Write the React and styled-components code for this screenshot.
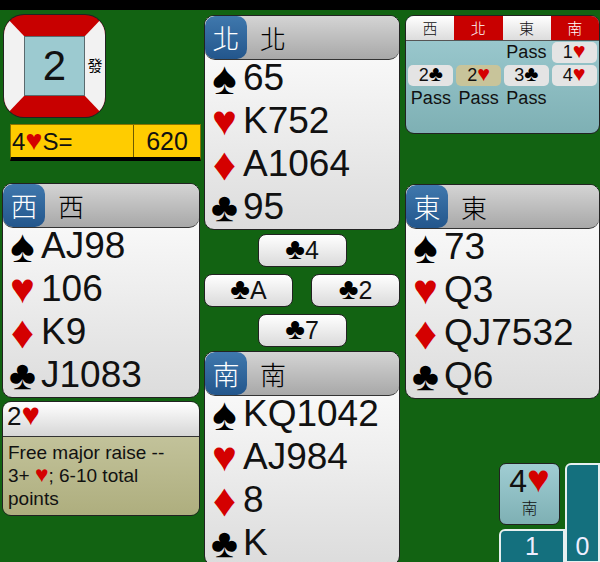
import styled, { createGlobalStyle } from 'styled-components';

const GlobalStyle = createGlobalStyle`
	html, body {
		margin: 0;
		padding: 0;
		height: 100%;
		overflow: hidden;
		background-color: #126312;
		font-family: 'Liberation Sans', 'Noto Sans CJK TC', sans-serif;
		color: #111;
	}
`;

const hands = {
	north: { seat: '北', cards: ['65', 'K752', 'A1064', '95'] },
	west: { seat: '西', cards: ['AJ98', '106', 'K9', 'J1083'] },
	east: { seat: '東', cards: ['73', 'Q3', 'QJ7532', 'Q6'] },
	south: { seat: '南', cards: ['KQ1042', 'AJ984', '8', 'K'] },
};

// glyphs differ in size, so each suit gets its own font size in the hand rows
const suits = [
	{ glyph: '♠', size: 46 },
	{ glyph: '♥', size: 42 },
	{ glyph: '♦', size: 46 },
	{ glyph: '♣', size: 41 },
];

function Hand({ seat, cards }) {
	return (
		<HandBox>
			<HandHeader>
				<SeatBadge>{seat}</SeatBadge>
				<SeatName>{seat}</SeatName>
			</HandHeader>
			{cards.map((c, i) => (
				<HandRow key={i}>
					<RowSuit $red={i === 1 || i === 2} $size={suits[i].size}>
						{suits[i].glyph}
					</RowSuit>
					{c}
				</HandRow>
			))}
		</HandBox>
	);
}

function Bid({ level, suit, $active }) {
	return (
		<BidChip $active={$active}>
			{level}
			<Suit $red={suit === '♥'}>{suit}</Suit>
		</BidChip>
	);
}

function App() {
	return (
		<>
			<GlobalStyle />
			<TopBar />
			<Table>
				<LeftColumn>
					<Board>
						<BoardNumber>2</BoardNumber>
						<Dealer>發</Dealer>
					</Board>
					<Score>
						<Contract>
							4<Suit $red>♥</Suit>S=
						</Contract>
						<Points>620</Points>
					</Score>
					<Hand {...hands.west} />
					<Explain>
						<ExplainHead>
							2<Suit $red>♥</Suit>
						</ExplainHead>
						<ExplainBody>
							Free major raise -- 3+ <Suit $red>♥</Suit>; 6-10 total points
						</ExplainBody>
					</Explain>
				</LeftColumn>

				<CenterColumn>
					<Hand {...hands.north} />
					<Trick>
						<TrickRow>
							<Played><Suit>♣</Suit>4</Played>
						</TrickRow>
						<TrickRow $split>
							<Played><Suit>♣</Suit>A</Played>
							<Played><Suit>♣</Suit>2</Played>
						</TrickRow>
						<TrickRow>
							<Played><Suit>♣</Suit>7</Played>
						</TrickRow>
					</Trick>
					<Hand {...hands.south} />
				</CenterColumn>

				<RightColumn>
					<Auction>
						<AuctionHead>
							<SeatTab>西</SeatTab>
							<SeatTab $vul>北</SeatTab>
							<SeatTab>東</SeatTab>
							<SeatTab $vul>南</SeatTab>
						</AuctionHead>
						<AuctionGrid>
							<span />
							<span />
							<Pass>Pass</Pass>
							<Bid level="1" suit="♥" />
							<Bid level="2" suit="♣" />
							<Bid level="2" suit="♥" $active />
							<Bid level="3" suit="♣" />
							<Bid level="4" suit="♥" />
							<Pass>Pass</Pass>
							<Pass>Pass</Pass>
							<Pass>Pass</Pass>
						</AuctionGrid>
					</Auction>
					<Hand {...hands.east} />
					<Status>
						<StatusLeft>
							<LastBid>
								<div>
									4<Suit $red>♥</Suit>
								</div>
								<LastSeat>南</LastSeat>
							</LastBid>
							<Tricks $wide>1</Tricks>
						</StatusLeft>
						<Tricks>0</Tricks>
					</Status>
				</RightColumn>
			</Table>
		</>
	);
}

export default App;

const TopBar = styled.div`
	height: 10px;
	background-color: #000;
`;

const Table = styled.div`
	display: grid;
	grid-template-columns: 198px 197px 195px;
	column-gap: 3px;
	padding: 5px 0 0 2px;
	height: 552px;
	box-sizing: border-box;
	overflow: hidden;
	align-items: start;
`;

const LeftColumn = styled.div`
	display: flex;
	flex-direction: column;
`;

const CenterColumn = styled.div`
	display: flex;
	flex-direction: column;
	margin-left: 1px;
`;

const RightColumn = styled.div`
	display: flex;
	flex-direction: column;
	margin-left: 2px;
	width: 195px;
`;

const Suit = styled.span`
	font-size: 1.2em;
	line-height: 0;
	color: ${(p) => (p.$red ? '#d40000' : '#000')};
`;

const Board = styled.div`
	position: relative;
	box-sizing: border-box;
	width: 101px;
	height: 102px;
	margin-left: 2px;
	display: flex;
	align-items: center;
	justify-content: center;
	background: #9ccad0;
	border-style: solid;
	border-width: 21px 20px;
	border-color: #c80000 #f2f2f2;
	border-radius: 20px;
	box-shadow: 0 0 0 1px #222, inset 0 0 0 1px #5a6a6e;
`;

const BoardNumber = styled.div`
	font-size: 42px;
	line-height: 1;
`;

const Dealer = styled.div`
	position: absolute;
	right: -20px;
	top: 18px;
	width: 20px;
	text-align: center;
	font-size: 15px;
	font-family: 'Noto Sans CJK TC', sans-serif;
	color: #000;
`;

const Score = styled.div`
	display: flex;
	margin: 7px 0 0 8px;
	width: 191px;
	height: 37px;
	background-color: #ffcc00;
	border: 1px solid #8a7300;
	border-bottom: 4px solid #000;
	box-sizing: border-box;
	font-size: 25px;
	line-height: 33px;
`;

const Contract = styled.div`
	flex: 1;
	padding-left: 1px;
	font-size: 24px;
	border-right: 1px solid #6b5a00;
`;

const Points = styled.div`
	width: 66px;
	text-align: center;
`;

const HandBox = styled.div`
	width: 100%;
	height: 215px;
	flex-shrink: 0;
	box-sizing: border-box;
	border: 1px solid #222;
	border-radius: 10px;
	background: linear-gradient(#ffffff, #dcdcdc);
	overflow: hidden;
	${LeftColumn} & {
		margin-top: 22px;
	}
	${RightColumn} & {
		margin-top: 50px;
	}
`;

const HandHeader = styled.div`
	display: flex;
	align-items: center;
	height: 43px;
	border-bottom: 1px solid #333;
	border-radius: 0 0 10px 10px;
	background: linear-gradient(#d4d4d4, #a8a8a8);
`;

const SeatBadge = styled.div`
	width: 42px;
	height: 43px;
	display: flex;
	align-items: center;
	justify-content: center;
	border-radius: 10px;
	background: linear-gradient(#3f78ad, #23568c);
	color: #fff;
	font-size: 27px;
	font-family: 'Noto Sans CJK TC', sans-serif;
	font-weight: 300;
`;

const SeatName = styled.div`
	margin-left: 13px;
	font-size: 26px;
	font-family: 'Noto Sans CJK TC', sans-serif;
	font-weight: 300;
	color: #000;
`;

const HandRow = styled.div`
	display: flex;
	align-items: center;
	box-sizing: border-box;
	height: 43px;
	padding: 0 0 8px 5px;
	font-size: 37px;
`;

const RowSuit = styled.span`
	width: 29px;
	margin-right: 4px;
	text-align: center;
	font-size: ${(p) => p.$size}px;
	line-height: 30px;
	color: ${(p) => (p.$red ? '#d40000' : '#000')};
`;

const Explain = styled.div`
	margin-top: 3px;
	width: 100%;
	box-sizing: border-box;
	border: 1px solid #222;
	border-radius: 9px;
	overflow: hidden;
`;

const ExplainHead = styled.div`
	height: 34px;
	line-height: 28px;
	font-size: 26px;
	padding-left: 4px;
	background: linear-gradient(#ffffff, #d6d6d6);
	border-bottom: 1px solid #333;
`;

const ExplainBody = styled.div`
	height: 78px;
	box-sizing: border-box;
	padding: 4px 12px 3px 5px;
	font-size: 19px;
	line-height: 23px;
	background: linear-gradient(#c2c29a, #aeae7e);
`;

const Trick = styled.div`
	display: flex;
	flex-direction: column;
	gap: 7px;
	padding: 3px 0;
	margin: 1px 0;
`;

const TrickRow = styled.div`
	display: flex;
	justify-content: ${(p) => (p.$split ? 'space-between' : 'center')};
`;

const Played = styled.div`
	width: 89px;
	height: 33px;
	box-sizing: border-box;
	border: 1px solid #222;
	border-radius: 8px;
	background: linear-gradient(#ffffff, #dadada);
	text-align: center;
	font-size: 25px;
	line-height: 31px;
`;

const Auction = styled.div`
	box-sizing: border-box;
	height: 119px;
	border: 1px solid #222;
	border-radius: 9px;
	overflow: hidden;
	background: linear-gradient(#a0cdd3, #7eb0b4);
`;

const AuctionHead = styled.div`
	display: grid;
	grid-template-columns: repeat(4, 1fr);
	height: 24px;
	border-bottom: 1px solid #555;
`;

const SeatTab = styled.div`
	text-align: center;
	font-size: 15px;
	line-height: 23px;
	font-family: 'Noto Sans CJK TC', sans-serif;
	font-weight: 300;
	background: ${(p) => (p.$vul ? '#c80000' : 'linear-gradient(#ffffff, #dcdcdc)')};
	color: ${(p) => (p.$vul ? '#fff' : '#111')};
`;

const AuctionGrid = styled.div`
	display: grid;
	grid-template-columns: repeat(4, 1fr);
	grid-auto-rows: 23px;
	padding: 0 1px;
	font-size: 18px;
	text-align: center;
`;

const Pass = styled.span`
	line-height: 22px;
`;

const BidChip = styled.div`
	width: 45px;
	height: 21px;
	margin: 1px auto;
	line-height: 21px;
	border-radius: 5px;
	background: ${(p) => (p.$active ? '#c8c49a' : '#e4e4e4')};
`;

const Status = styled.div`
	display: flex;
	justify-content: flex-end;
	margin-top: 64px;
`;

const StatusLeft = styled.div`
	display: flex;
	flex-direction: column;
	gap: 4px;
	align-items: flex-start;
	width: 66px;
`;

const LastBid = styled.div`
	box-sizing: border-box;
	width: 61px;
	height: 62px;
	border: 1px solid #222;
	border-radius: 7px;
	background: linear-gradient(#a0cdd3, #7eb0b4);
	text-align: center;
	font-size: 32px;
	line-height: 34px;
`;

const LastSeat = styled.div`
	font-size: 16px;
	line-height: 18px;
	font-family: 'Noto Sans CJK TC', sans-serif;
	font-weight: 300;
`;

const Tricks = styled.div`
	box-sizing: border-box;
	width: ${(p) => (p.$wide ? '66px' : '35px')};
	height: 100px;
	border: 2px solid #e6f0f0;
	border-radius: 6px 0 0 0;
	background-color: #14707e;
	color: #eef;
	font-size: 25px;
	text-align: center;
	padding-top: ${(p) => (p.$wide ? '0' : '66px')};
	line-height: 30px;
`;
